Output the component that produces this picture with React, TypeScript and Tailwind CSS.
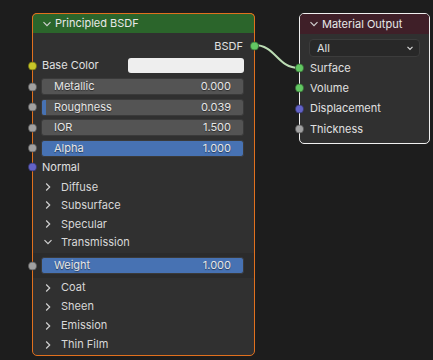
import React from 'react';

const FONT = { fontFamily: 'Inter, "Noto Sans", "DejaVu Sans", sans-serif' };

const SOCKET = {
  yellow: 'bg-[#c7c729]',
  gray: 'bg-[#a1a1a1]',
  purple: 'bg-[#6363c7]',
  green: 'bg-[#63c763]',
};

// sockets sit centred on the node border
function Socket({ color, offset = 'left-[-5px]' }: { color: keyof typeof SOCKET; offset?: string }) {
  return (
    <span
      className={`absolute top-1/2 -translate-y-1/2 w-[9px] h-[9px] rounded-full border border-black/40 ${SOCKET[color]} ${offset}`}
    />
  );
}

function Chevron({ open }: { open: boolean }) {
  return (
    <svg width="10" height="10" viewBox="0 0 10 10" className="shrink-0 text-[#d0d0d0]">
      {open ? (
        <path d="M1.5 3.2 L5 6.7 L8.5 3.2" fill="none" stroke="currentColor" strokeWidth="1.2" />
      ) : (
        <path d="M3.2 1.5 L6.7 5 L3.2 8.5" fill="none" stroke="currentColor" strokeWidth="1.2" />
      )}
    </svg>
  );
}

const TXT = 'text-[11px] text-[#e0e0e0]';
const FIELD_TXT = 'relative text-[11px] text-[#e6e6e6] [text-shadow:0_1px_1px_rgba(0,0,0,0.5)]';

function Field({
  label,
  value,
  fill,
  socket = 'gray',
}: {
  label: string;
  value: string;
  fill?: 'full' | 'bar';
  socket?: keyof typeof SOCKET;
}) {
  return (
    <div className="relative h-[17px] ml-[8px] mr-[10px]">
      <Socket color={socket} offset="left-[-13px]" />
      <div
        className={`relative h-full rounded-[3px] border border-[#3a3a3a] overflow-hidden flex items-center justify-between px-[12px] ${
          fill === 'full' ? 'bg-[#4772b3]' : 'bg-[#545454]'
        }`}
      >
        {fill === 'bar' && <span className="absolute left-0 top-0 bottom-0 w-[4px] bg-[#4772b3]" />}
        <span className={FIELD_TXT}>{label}</span>
        <span className={FIELD_TXT}>{value}</span>
      </div>
    </div>
  );
}

function Panel({ label, open = false, h = 'h-[18.5px]' }: { label: string; open?: boolean; h?: string }) {
  return (
    <div className={`${h} flex items-center gap-[8px] pl-[10px]`}>
      <Chevron open={open} />
      <span className="text-[11px] text-[#d8d8d8]">{label}</span>
    </div>
  );
}

function PrincipledNode() {
  return (
    <div className="absolute left-[32px] top-[13px] w-[223px] h-[343px] rounded-[5px] border border-[#e0701e] bg-[#303030]">
      <div className="h-[20px] -mx-px -mt-px rounded-t-[5px] border border-b-0 border-[#e0701e] bg-[#2b652b] flex items-center gap-[3px] pl-[9px]">
        <Chevron open />
        <span className="text-[11px] text-[#e8e8e8]">Principled BSDF</span>
      </div>
      <div className="pt-[3px]">
        <div className="relative h-[20px] flex items-center justify-end pr-[11px]">
          <span className={TXT}>BSDF</span>
          <Socket color="green" offset="right-[-5px]" />
        </div>
        <div className="relative h-[19px] flex items-center pl-[9px] pr-[10px]">
          <Socket color="yellow" />
          <span className={TXT}>Base Color</span>
          <div className="ml-auto w-[116px] h-[15px] rounded-[3px] bg-[#eeeeee]" />
        </div>
        <div className="mt-[3px] flex flex-col gap-[3.5px]">
          <Field label="Metallic" value="0.000" />
          <Field label="Roughness" value="0.039" fill="bar" />
          <Field label="IOR" value="1.500" />
          <Field label="Alpha" value="1.000" fill="full" />
        </div>
        <div className="relative h-[21px] flex items-center pl-[9px]">
          <Socket color="purple" />
          <span className={TXT}>Normal</span>
        </div>
        <Panel label="Diffuse" />
        <Panel label="Subsurface" />
        <Panel label="Specular" />
        <Panel label="Transmission" open />
        <div className="mt-[1.5px] h-[25px] bg-[#2b2b2b] flex flex-col justify-center">
          <Field label="Weight" value="1.000" fill="full" />
        </div>
        <Panel label="Coat" h="h-[19px]" />
        <Panel label="Sheen" h="h-[19px]" />
        <Panel label="Emission" h="h-[19px]" />
        <Panel label="Thin Film" h="h-[19px]" />
      </div>
    </div>
  );
}

function OutputRow({ label, color }: { label: string; color: keyof typeof SOCKET }) {
  return (
    <div className="relative h-[20.3px] flex items-center pl-[10px]">
      <Socket color={color} />
      <span className={TXT}>{label}</span>
    </div>
  );
}

function MaterialOutputNode() {
  return (
    <div className="absolute left-[299px] top-[13px] w-[131px] h-[131px] rounded-[5px] border border-[#f0f0f0] bg-[#303030]">
      <div className="h-[20px] rounded-t-[4px] bg-[#3f1f28] flex items-center gap-[3px] pl-[9px]">
        <Chevron open />
        <span className="text-[11px] text-[#e8e8e8]">Material Output</span>
      </div>
      <div className="mt-[5px] mx-[9px] h-[18px] rounded-[4px] border border-[#3c3c3c] bg-[#282828] flex items-center justify-between pl-[7px] pr-[5px]">
        <span className={TXT}>All</span>
        <svg width="8" height="8" viewBox="0 0 8 8" className="text-[#d8d8d8]">
          <path d="M1.5 2.8 L4 5.3 L6.5 2.8" fill="none" stroke="currentColor" strokeWidth="1.2" />
        </svg>
      </div>
      <div className="mt-px">
        <OutputRow label="Surface" color="green" />
        <OutputRow label="Volume" color="green" />
        <OutputRow label="Displacement" color="purple" />
        <OutputRow label="Thickness" color="gray" />
      </div>
    </div>
  );
}

export default function App() {
  return (
    <div className="relative w-[433px] h-[360px] overflow-hidden bg-[#1d1d1d]" style={FONT}>
      <svg className="absolute inset-0" width="433" height="360">
        <path d="M254 45 C 276 45, 277 68, 299 68" fill="none" stroke="#bcdcb4" strokeWidth="2" />
      </svg>
      <PrincipledNode />
      <MaterialOutputNode />
    </div>
  );
}
